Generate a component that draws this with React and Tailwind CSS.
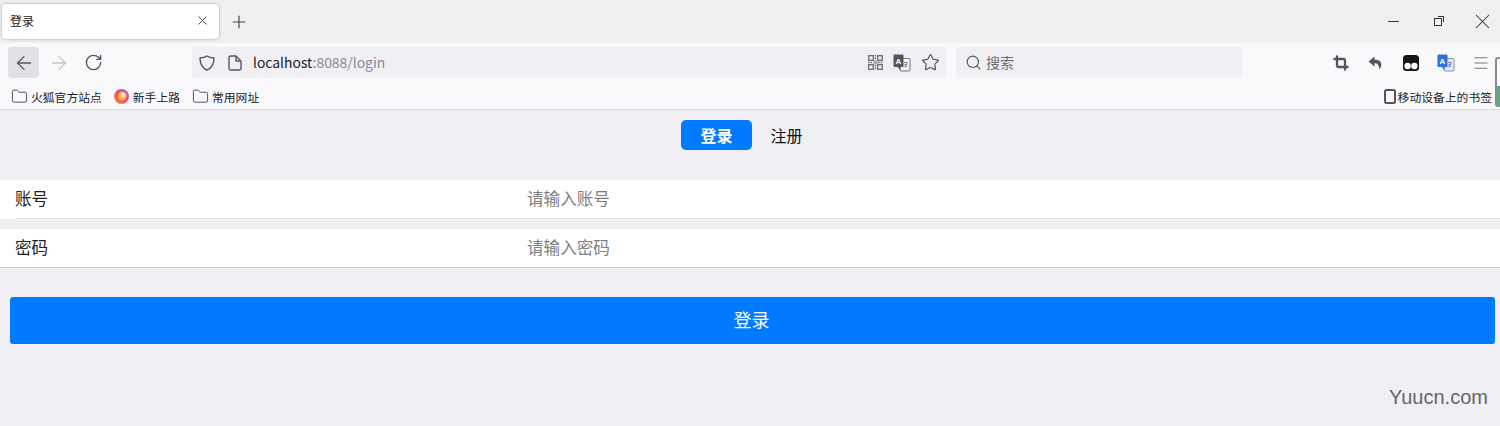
import React from 'react';
import { ArrowLeft, ArrowRight, RotateCw, Star, Search, Crop, Menu, X, Plus, Minus, Folder } from 'lucide-react';

const cjk = "font-['Noto_Sans_CJK_SC','Liberation_Sans',sans-serif]";

const Translate = ({ dark }) => (
  <svg width="18" height="18" viewBox="0 0 18 18" className="shrink-0">
    <rect x="7" y="4.5" width="10" height="12.5" rx="1" fill={dark ? '#f4f4f4' : '#e3e8f2'} stroke={dark ? '#777' : '#8a94a8'} strokeWidth="1" />
    <path d="M11 8.5h3v2h-2v2h2" fill="none" stroke={dark ? '#777' : '#5f7fc4'} strokeWidth="1" />
    <path d="M1.5 0.5h8a1 1 0 0 1 1 1V13h-3v3l-3-3H1.5a1 1 0 0 1-1-1V1.5a1 1 0 0 1 1-1z" fill={dark ? '#55555a' : '#2f6fe0'} />
    <text x="2.6" y="9.5" fontSize="8" fontWeight="700" fill="#fff" fontFamily="Liberation Sans">A</text>
  </svg>
);

const QrIcon = () => (
  <svg width="15" height="15" viewBox="0 0 15 15" className="shrink-0" fill="none" stroke="#6a6a6f" strokeWidth="1.3">
    <rect x="0.7" y="0.7" width="4.6" height="4.6" />
    <rect x="9.7" y="0.7" width="4.6" height="4.6" />
    <rect x="0.7" y="9.7" width="4.6" height="4.6" />
    <rect x="9.7" y="9.7" width="4.6" height="4.6" />
    <rect x="5.5" y="5.5" width="4" height="4" fill="#6a6a6f" fillOpacity="0.55" stroke="none" />
    <path d="M7.5 0v5M7.5 10v5M0 7.5h5M10 7.5h5" strokeDasharray="1.6 1" />
  </svg>
);

const ShieldIcon = () => (
  <svg width="16" height="16" viewBox="0 0 16 16" fill="none" stroke="#55555b" strokeWidth="1.4" strokeLinejoin="round">
    <path d="M8 1 C10 2.4 12.5 2.8 15 3 C15 9 13 13 8 15 C3 13 1 9 1 3 C3.5 2.8 6 2.4 8 1 Z" />
  </svg>
);

const PageIcon = () => (
  <svg width="14" height="16" viewBox="0 0 14 16" fill="none" stroke="#55555b" strokeWidth="1.4" strokeLinejoin="round">
    <path d="M3 1h5l5 5v7a2 2 0 0 1-2 2H3a2 2 0 0 1-2-2V3a2 2 0 0 1 2-2z" />
    <path d="M8 1v5h5" />
  </svg>
);

const UndoIcon = () => (
  <svg width="15" height="14" viewBox="0 0 15 14" fill="#55555b">
    <path d="M6.5 0.5 L0.5 5.5 L6.5 10.5 V7.2 C9.5 7.2 11 8.8 11.5 13.5 C14.8 9 14 3.6 6.5 3.6 Z" />
  </svg>
);

const FoxIcon = () => (
  <svg width="15" height="15" viewBox="0 0 15 15" className="shrink-0">
    <defs>
      <linearGradient id="fox" x1="0.9" y1="0" x2="0.1" y2="1">
        <stop offset="0" stopColor="#9a5cf0" />
        <stop offset="0.45" stopColor="#f0447a" />
        <stop offset="1" stopColor="#ff8a2a" />
      </linearGradient>
    </defs>
    <circle cx="7.5" cy="7.5" r="7.5" fill="url(#fox)" />
    <circle cx="8.3" cy="7" r="4.4" fill="#ffb03a" />
    <circle cx="9" cy="6" r="2.2" fill="#f4e4f0" />
  </svg>
);

const Slot = ({ children, className = '' }) => (
  <div className={`flex h-[31px] w-[35px] shrink-0 items-center justify-center ${className}`}>{children}</div>
);

const Bookmark = ({ label }) => (
  <div className="flex items-center gap-[3px]">
    <Folder size={17} strokeWidth={1.3} className="text-[#45454b]" />
    <span className="text-[11.8px] text-[#1c1b22]">{label}</span>
  </div>
);

const Row = ({ label, hint, inset }) => (
  <div className={`h-[39px] bg-white ${inset ? 'pl-[15px]' : 'pl-[15px] border-b border-[#cfcfd2]'}`}>
    <div className={`flex items-center pb-[2px] ${inset ? 'h-[39px] border-b border-[#e2e2e6]' : 'h-[38px]'}`}>
      <label className="w-[512px] text-[16.6px] text-[#222]">{label}</label>
      <span className="text-[16.6px] text-[#808080]">{hint}</span>
    </div>
  </div>
);

export default function App() {
  return (
    <div className={`relative h-[426px] w-[1500px] overflow-hidden bg-[#efeff4] ${cjk}`}>
      {/* tab strip */}
      <div className="flex h-[43px] bg-[#f0f0f0] pl-[2px] pt-[4px]">
        <div className="flex h-[35px] w-[217px] items-center justify-between rounded-[4px] bg-white pb-[2px] pl-[8px] pr-[9px] shadow-[0_0_3px_rgba(0,0,0,0.35)]">
          <span className="text-[12px] text-[#222]">登录</span>
          <X size={15} strokeWidth={1.6} className="text-[#555]" />
        </div>
        <div className="ml-[10px] flex h-[35px] items-center">
          <Plus size={20} strokeWidth={1.4} className="text-[#444]" />
        </div>
        <div className="ml-auto flex h-[35px] items-center pr-[5px]">
          <Minus size={17} strokeWidth={1.4} className="text-[#333]" />
          <div className="ml-[32px] h-[8px] w-[8px] border border-[#333] bg-[#f0f0f0] shadow-[2px_-2px_0_-1px_#f0f0f0,3px_-3px_0_-1px_#333]" />
          <div className="ml-[28px]"><X size={25} strokeWidth={1} className="text-[#333]" /></div>
        </div>
      </div>

      {/* toolbar */}
      <div className="flex h-[42px] items-start bg-[#f9f9fb] pl-[6px] pr-[2px] pt-[4px]">
        <Slot>
          <div className="flex h-[31px] w-[31px] items-center justify-center rounded-[4px] bg-[#e0e0e6]">
            <ArrowLeft size={22} strokeWidth={1.4} className="text-[#55555b]" />
          </div>
        </Slot>
        <Slot><ArrowRight size={22} strokeWidth={1.4} className="text-[#c4c4c8]" /></Slot>
        <Slot><RotateCw size={19} strokeWidth={1.7} className="text-[#55555b]" /></Slot>
        <div className="ml-[81px] flex h-[31px] w-[754px] items-center rounded-[4px] bg-[#f0f0f4] pl-[7px] pr-[6px]">
          <ShieldIcon />
          <div className="ml-[13px]"><PageIcon /></div>
          <span className="ml-[11px] text-[13.9px] text-[#1c1b22]">localhost<span className="text-[#8a8a90]">:8088/login</span></span>
          <div className="ml-auto flex items-center gap-[10px]">
            <QrIcon />
            <Translate dark />
            <Star size={19} strokeWidth={1.5} className="text-[#55555b]" />
          </div>
        </div>
        <div className="ml-[10px] flex h-[31px] w-[286px] items-center rounded-[4px] bg-[#f0f0f4] pl-[9px]">
          <Search size={17} strokeWidth={1.6} className="text-[#55555b]" />
          <span className="ml-[4px] text-[14px] text-[#6d6d72]">搜索</span>
        </div>
        <div className="ml-auto flex">
          <Slot><Crop size={16} strokeWidth={3.4} className="text-[#55555b]" /></Slot>
          <Slot><UndoIcon /></Slot>
          <Slot>
            <svg width="16" height="16" viewBox="0 0 16 16">
              <rect width="16" height="16" rx="3.5" fill="#17171a" />
              <circle cx="4.6" cy="11" r="3.2" fill="#fff" />
              <circle cx="11.4" cy="11" r="3.2" fill="#fff" />
            </svg>
          </Slot>
          <Slot><Translate /></Slot>
          <Slot><Menu size={18} strokeWidth={1.6} className="text-[#77777c]" /></Slot>
        </div>
      </div>

      {/* bookmarks */}
      <div className="flex h-[25px] items-center justify-between border-b border-[#dcdcdf] bg-[#f9f9fb] pb-[1px] pl-[11px] pr-[8px]">
        <div className="flex items-center gap-[12px]">
          <Bookmark label="火狐官方站点" />
          <div className="flex items-center gap-[4px]">
            <FoxIcon />
            <span className="text-[11.8px] text-[#1c1b22]">新手上路</span>
          </div>
          <Bookmark label="常用网址" />
        </div>
        <div className="flex items-center gap-[2px]">
          <div className="h-[15px] w-[12px] rounded-[2.5px] border-2 border-[#55555b]" />
          <span className="text-[11.8px] text-[#1c1b22]">移动设备上的书签</span>
        </div>
      </div>

      {/* page */}
      <div className="flex justify-center pl-[4px] pt-[10px]">
        <div className="flex h-[30px] w-[71px] items-center justify-center rounded-[5px] bg-[#007aff] text-[16px] font-bold text-white">登录</div>
        <div className="flex h-[30px] w-[71px] items-center justify-center pb-[1px] pr-[2px] text-[16px] text-[#111]">注册</div>
      </div>

      <div className="mt-[30px] flex flex-col gap-[10px]">
        <Row label="账号" hint="请输入账号" inset />
        <Row label="密码" hint="请输入密码" />
      </div>

      <div className="mt-[29px] pl-[10px] pr-[5px]">
        <button className="flex h-[47px] w-full items-center justify-center rounded-[3px] bg-[#007aff] pb-[2px] pr-[2px] text-[18px] text-white">登录</button>
      </div>

      {/* sidebar tab peeking in at the edge + watermark */}
      <div className="absolute left-[1495px] top-[57px] h-[50px] w-[8px] overflow-hidden rounded-l-[3px] border-2 border-[#8a8a8a] bg-white">
        <div className="absolute bottom-0 left-0 h-[19px] w-full bg-[#47b27a]" />
      </div>
      <span className="absolute left-[1389px] top-[382px] font-['Liberation_Sans',sans-serif] text-[20px] text-[#666]">Yuucn.com</span>
    </div>
  );
}
